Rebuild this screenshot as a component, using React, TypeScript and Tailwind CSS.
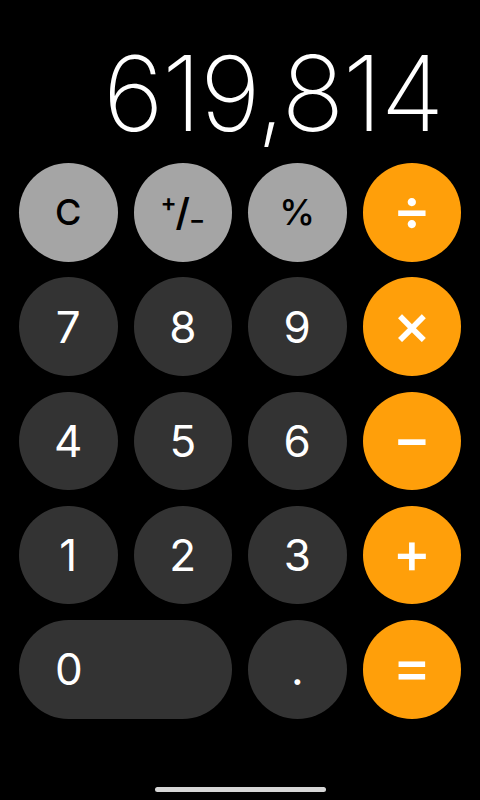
type Kind = 'fn' | 'num' | 'op';

type Key = {
  label: string;
  kind: Kind;
  wide?: boolean;
};

const keys: Key[] = [
  { label: 'C', kind: 'fn' },
  { label: '+/-', kind: 'fn' },
  { label: '%', kind: 'fn' },
  { label: '÷', kind: 'op' },
  { label: '7', kind: 'num' },
  { label: '8', kind: 'num' },
  { label: '9', kind: 'num' },
  { label: '×', kind: 'op' },
  { label: '4', kind: 'num' },
  { label: '5', kind: 'num' },
  { label: '6', kind: 'num' },
  { label: '−', kind: 'op' },
  { label: '1', kind: 'num' },
  { label: '2', kind: 'num' },
  { label: '3', kind: 'num' },
  { label: '+', kind: 'op' },
  { label: '0', kind: 'num', wide: true },
  { label: '.', kind: 'num' },
  { label: '=', kind: 'op' },
];

const kindClass: Record<Kind, string> = {
  fn: 'bg-[#a5a5a5] text-black',
  num: 'bg-[#333333] text-white',
  op: 'bg-[#ff9f0a] text-white',
};

const Label = ({ k }: { k: Key }) => {
  if (k.label === '+/-') {
    // small plus up-left, slash, small minus down-right
    return (
      <span className="flex items-center font-semibold leading-none">
        <span className="text-[24px] -translate-y-[9px] mr-[-1px]">+</span>
        <span className="text-[38px]">/</span>
        <span className="text-[24px] translate-y-[8px] ml-[-1px]">−</span>
      </span>
    );
  }
  if (k.kind === 'fn') {
    return <span className="text-[36px] font-medium leading-none">{k.label}</span>;
  }
  if (k.kind === 'op') {
    return <span className="text-[58px] font-medium leading-none -translate-y-[3px]">{k.label}</span>;
  }
  return <span className="text-[44px] font-normal leading-none">{k.label}</span>;
};

const CalcKey = ({ k }: { k: Key }) => (
  <button
    className={`${kindClass[k.kind]} ${
      k.wide ? 'col-span-2 justify-start pl-[36px]' : 'justify-center'
    } h-[98.5px] rounded-full flex items-center`}
  >
    <Label k={k} />
  </button>
);

const App = () => {
  return (
    <div className="w-[480px] h-[800px] bg-black flex flex-col items-center font-['Inter','Liberation_Sans',sans-serif]">
      <div className="w-full h-[163px] flex items-end justify-end pr-[37px] pb-[18px]">
        <span className="text-white text-[104px] font-extralight leading-none tracking-[-1.5px]">
          619,814
        </span>
      </div>
      <div className="w-[442px] grid grid-cols-4 gap-x-[16px] gap-y-[15.75px]">
        {keys.map((k) => (
          <CalcKey key={k.label} k={k} />
        ))}
      </div>
      <div className="mt-auto mb-[8px] w-[171px] h-[5px] rounded-full bg-[#d6d6d6]" />
    </div>
  );
};

export default App;
